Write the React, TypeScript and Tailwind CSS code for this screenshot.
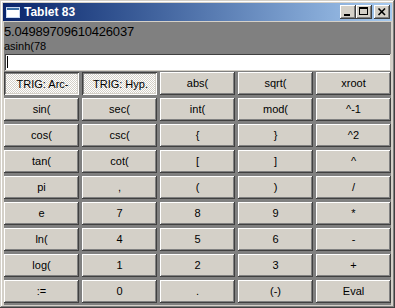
const rows: string[][] = [
  ['TRIG: Arc-', 'TRIG: Hyp.', 'abs(', 'sqrt(', 'xroot'],
  ['sin(', 'sec(', 'int(', 'mod(', '^-1'],
  ['cos(', 'csc(', '{', '}', '^2'],
  ['tan(', 'cot(', '[', ']', '^'],
  ['pi', ',', '(', ')', '/'],
  ['e', '7', '8', '9', '*'],
  ['ln(', '4', '5', '6', '-'],
  ['log(', '1', '2', '3', '+'],
  [':=', '0', '.', '(-)', 'Eval'],
];

const toggles = ['TRIG: Arc-', 'TRIG: Hyp.'];

const raised =
  'bg-[#d4d0c8] shadow-[inset_-1px_-1px_#404040,inset_1px_1px_#ffffff,inset_-2px_-2px_#808080,inset_2px_2px_#d4d0c8]';
const sunken =
  'bg-[image:repeating-conic-gradient(#ffffff_0%_25%,#d4d0c8_0%_50%)] bg-[length:2px_2px] shadow-[inset_1px_1px_#404040,inset_-1px_-1px_#ffffff,inset_2px_2px_#808080,inset_-2px_-2px_#d4d0c8]';

function CalcKey({ label }: { label: string }) {
  const pressed = toggles.includes(label);
  return (
    <button
      className={`h-[23px] flex items-center justify-center text-[11px] text-black ${pressed ? `${sunken} pt-[2px] pl-[2px]` : raised}`}
    >
      {label}
    </button>
  );
}

function CaptionButton({ kind }: { kind: 'min' | 'max' | 'close' }) {
  return (
    <div className={`w-[16px] h-[14px] flex items-center justify-center ${raised}`}>
      <svg width="16" height="14" viewBox="0 0 16 14">
        {kind === 'min' && <rect x="4" y="9" width="6" height="2" fill="#000" />}
        {kind === 'max' && (
          <g fill="none" stroke="#000">
            <rect x="3.5" y="2.5" width="8" height="7" />
            <line x1="3" y1="3.5" x2="12" y2="3.5" />
          </g>
        )}
        {kind === 'close' && (
          <g stroke="#000" strokeWidth="1.6">
            <line x1="4.5" y1="3.5" x2="11" y2="10" />
            <line x1="11" y1="3.5" x2="4.5" y2="10" />
          </g>
        )}
      </svg>
    </div>
  );
}

export default function App() {
  return (
    <div className="w-[395px] h-[308px] p-[3px] flex flex-col bg-[#d4d0c8] shadow-[inset_-1px_-1px_#404040,inset_1px_1px_#d4d0c8,inset_-2px_-2px_#808080,inset_2px_2px_#ffffff] font-['Liberation_Sans',Arial,sans-serif]">
      {/* title bar */}
      <div className="h-[18px] flex items-center bg-gradient-to-r from-[#0a246a] to-[#a6caf0] pl-[2px] pr-[2px]">
        <svg width="16" height="16" viewBox="0 0 16 16" className="shrink-0">
          <rect x="1.5" y="3.5" width="13" height="10" fill="#ffffff" stroke="#c8d8f0" />
          <rect x="2" y="4" width="12" height="2" fill="#3a6ea5" />
        </svg>
        <span className="ml-[3px] text-[12px] font-bold text-white leading-none">Tablet 83</span>
        <div className="ml-auto flex items-center">
          <CaptionButton kind="min" />
          <CaptionButton kind="max" />
          <div className="w-[2px]" />
          <CaptionButton kind="close" />
        </div>
      </div>

      {/* client */}
      <div className="mx-[1px] mt-[1px] flex-1 bg-[#808080] flex flex-col pb-[1px]">
        <div className="h-[16px] text-[13px] leading-[20px] tracking-[-0.2px] text-black whitespace-nowrap">
          5.04989709610426037
        </div>
        <div className="h-[15px] text-[11px] leading-[17px] text-black whitespace-nowrap">asinh(78</div>
        <div className="h-[18px] bg-white flex items-center pl-[3px] shadow-[inset_1px_1px_#808080,inset_-1px_-1px_#d4d0c8,inset_2px_2px_#404040]">
          <div className="w-[1px] h-[12px] bg-black" />
        </div>
        <div className="mt-[1px] grid grid-cols-5 gap-[3px]">
          {rows.flat().map((label, i) => (
            <CalcKey key={i} label={label} />
          ))}
        </div>
      </div>
    </div>
  );
}
